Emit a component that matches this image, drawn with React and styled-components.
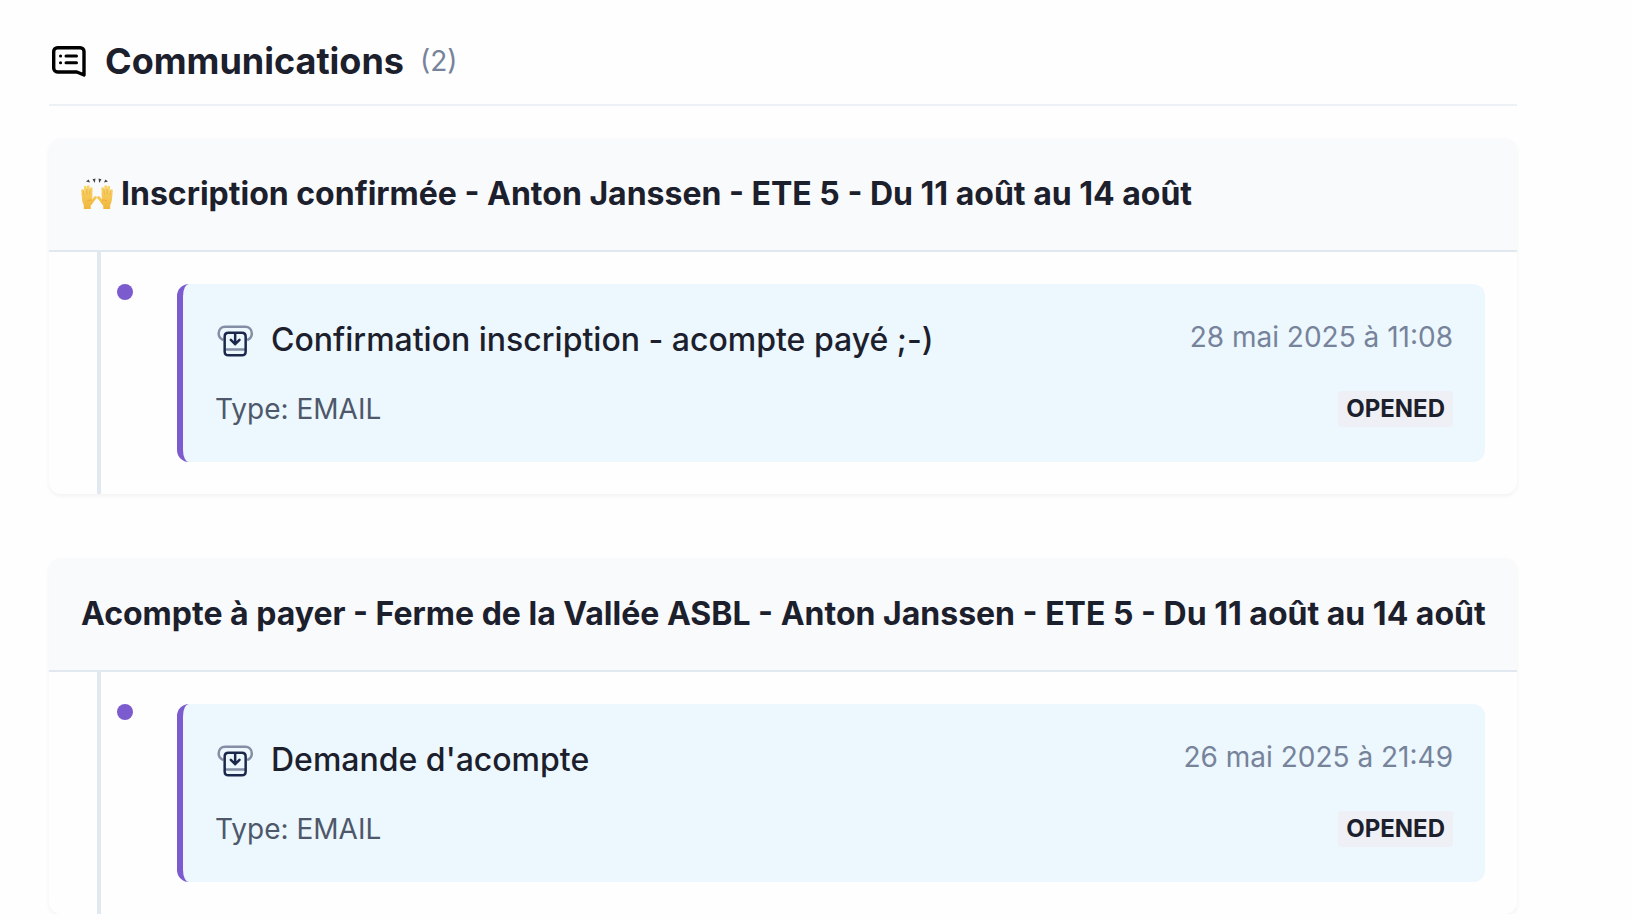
import React from "react";
import styled, { createGlobalStyle } from "styled-components";

const GlobalStyle = createGlobalStyle`
  * {
    box-sizing: border-box;
  }

  body {
    margin: 0;
    background: #fefefe;
    color: #1c202c;
    font-family: Inter, "Liberation Sans", sans-serif;
    font-size: 32px;
    line-height: 48px;
  }
`;

const communications = [
  {
    id: 1,
    celebrate: true,
    subject: "Inscription confirmée - Anton Janssen - ETE 5 - Du 11 août au 14 août",
    messages: [
      {
        id: 11,
        title: "Confirmation inscription - acompte payé ;-)",
        date: "28 mai 2025 à 11:08",
        type: "EMAIL",
        status: "OPENED",
      },
    ],
  },
  {
    id: 2,
    subject: "Acompte à payer - Ferme de la Vallée ASBL - Anton Janssen - ETE 5 - Du 11 août au 14 août",
    messages: [
      {
        id: 21,
        title: "Demande d'acompte",
        date: "26 mai 2025 à 21:49",
        type: "EMAIL",
        status: "OPENED",
      },
    ],
  },
];

function ChatListIcon() {
  return (
    <Icon viewBox="0 0 40 40" aria-hidden="true">
      <g fill="none" stroke="#000" strokeWidth="3.4" strokeLinecap="round" strokeLinejoin="round">
        <path d="M35 34V10.500a3.800 3.800 0 0 0-3.800-3.800H8.500a3.800 3.800 0 0 0-3.800 3.800v16.700A3.800 3.800 0 0 0 8.500 31h19.400z" />
        <path d="M17 15h10.500M17 21.800h10.500M11.500 15h.1M11.500 21.800h.1" strokeWidth="3" />
      </g>
    </Icon>
  );
}

function ReceiveIcon() {
  return (
    <Icon viewBox="0 0 24 24" aria-hidden="true">
      <g fill="none" stroke="#1c274c" strokeWidth="1.5">
        <path opacity="0.5" d="M5 12c-1.700-.7-2.800-2-2.800-3.900C2.200 5.700 3.800 4 6.100 4h12c2.300 0 4 1.700 4 4.100 0 1.900-1 3.200-2.800 3.900" />
        <path d="M5.800 10c0-1.500.8-2.300 2.300-2.300h8c1.500 0 2.300.8 2.300 2.300v8.900c0 1.500-.8 2.300-2.300 2.300h-8c-1.500 0-2.300-.8-2.300-2.300z" />
        <path opacity="0.5" d="M6.200 17.700h12" />
        <path d="M12.100 8v6.500m0 0 2.600-2.600m-2.600 2.600-2.600-2.600" strokeLinecap="round" strokeLinejoin="round" />
      </g>
    </Icon>
  );
}

function RaisedHandsIcon() {
  return (
    <HandsIcon viewBox="0 0 32 32" role="img" aria-label="🙌">
      <defs>
        <linearGradient id="skin" gradientUnits="userSpaceOnUse" x1="0" y1="7" x2="0" y2="31">
          <stop offset="0" stopColor="#fbd76c" />
          <stop offset="1" stopColor="#f0b53b" />
        </linearGradient>
        <g id="hand">
          <path
            d="M1.500 12.500 2.500 20M4.300 9l.7 10M7.300 8.500v10M10.300 10.500l-.5 9M14.500 19.500l-5 5.500"
            fill="none"
            stroke="url(#skin)"
            strokeWidth="2.700"
            strokeLinecap="round"
          />
          <path d="M.8 16h10.400l-.2 6 2.300.5c-1.300 2.500-2.300 4-3.600 5V31H2.800v-4C1.300 24.500.8 21 .8 16z" fill="url(#skin)" />
          <path
            d="M3 17l-.4-4.500m3.300 4L5.800 11m2.900 5.500.2-5.500M10.500 22.500c-1.800-.8-3.300-.4-4.500.8"
            fill="none"
            stroke="#d8952f"
            strokeWidth=".5"
          />
        </g>
      </defs>
      <use href="#hand" />
      <use href="#hand" transform="matrix(-1 0 0 1 32 0)" />
      <path d="m5 3.500 2.600-2L9 4.500zM11.500 1.200l3-.6-.7 4.400zM17.500.6l3 .6-2.300 3.800zM24.400 1.500 27 3.500l-4 1z" fill="#454545" />
    </HandsIcon>
  );
}

function Message({ message }) {
  return (
    <MessageCard>
      <MessageRow $gap>
        <MessageTitle>
          <ReceiveIcon />
          {message.title}
        </MessageTitle>
        <MessageDate>{message.date}</MessageDate>
      </MessageRow>
      <MessageRow $center>
        <MessageType>Type: {message.type}</MessageType>
        <Badge>{message.status}</Badge>
      </MessageRow>
    </MessageCard>
  );
}

export default function App() {
  return (
    <Container>
      <GlobalStyle />
      <Header>
        <ChatListIcon />
        <Heading>Communications</Heading>
        <Count>({communications.length})</Count>
      </Header>
      <Groups>
        {communications.map((group) => (
          <Group key={group.id}>
            <GroupHeader>
              {group.celebrate && <RaisedHandsIcon />}
              <GroupTitle>{group.subject}</GroupTitle>
            </GroupHeader>
            <Timeline>
              {group.messages.map((message) => (
                <TimelineItem key={message.id}>
                  <Dot />
                  <Message message={message} />
                </TimelineItem>
              ))}
            </Timeline>
          </Group>
        ))}
      </Groups>
    </Container>
  );
}

const Container = styled.main`
  padding: 34px 115px 0 49px;
`;

const Header = styled.header`
  display: flex;
  align-items: center;
  gap: 16px;
  padding-bottom: 16px;
  border-bottom: 2px solid #edf0f5;
`;

const Icon = styled.svg`
  flex: none;
  width: 40px;
  height: 40px;
`;

const Heading = styled.h2`
  margin: 0;
  font-size: 36px;
  line-height: 54px;
  font-weight: 700;
`;

const Count = styled.span`
  color: #77839a;
  font-size: 28px;
  line-height: 42px;
`;

const Groups = styled.div`
  display: flex;
  flex-direction: column;
  gap: 64px;
  padding-top: 32px;
`;

const Group = styled.section`
  overflow: hidden;
  border-radius: 12px;
  background: #fefefe;
  box-shadow: 0 2px 4px rgba(0, 0, 0, 0.05);
`;

const GroupHeader = styled.div`
  display: flex;
  align-items: center;
  gap: 8px;
  padding: 32px;
  border-bottom: 2px solid #e2e8f0;
  background: #f9fafc;
`;

const HandsIcon = styled.svg`
  flex: none;
  width: 32px;
  height: 32px;
`;

const GroupTitle = styled.h3`
  margin: 0;
  font-size: 32px;
  line-height: 48px;
  font-weight: 700;
  white-space: nowrap;
`;

const Timeline = styled.div`
  margin-left: 48px;
  padding: 32px 32px 32px 16px;
  border-left: 4px solid #e2e8f0;
`;

const TimelineItem = styled.div`
  display: flex;
  align-items: flex-start;
  gap: 44px;
`;

const Dot = styled.span`
  flex: none;
  width: 16px;
  height: 16px;
  border-radius: 50%;
  background: #7b5bcd;
`;

const MessageCard = styled.article`
  flex: 1;
  padding: 32px;
  border-left: 6px solid #7b5bcd;
  border-radius: 12px;
  background: #ecf7fe;
`;

const MessageRow = styled.div`
  display: flex;
  justify-content: space-between;
  align-items: ${({ $center }) => ($center ? "center" : "flex-start")};
  margin-bottom: ${({ $gap }) => ($gap ? "24px" : "0")};
`;

const MessageTitle = styled.div`
  display: flex;
  align-items: center;
  gap: 16px;
  font-weight: 500;
`;

const MessageDate = styled.time`
  color: #77839a;
  font-size: 28px;
  line-height: 42px;
`;

const MessageType = styled.span`
  color: #4e586a;
  font-size: 28px;
  line-height: 42px;
`;

const Badge = styled.span`
  padding: 0 8px;
  border-radius: 4px;
  background: #eef0f5;
  font-size: 24px;
  line-height: 36px;
  font-weight: 700;
`;
